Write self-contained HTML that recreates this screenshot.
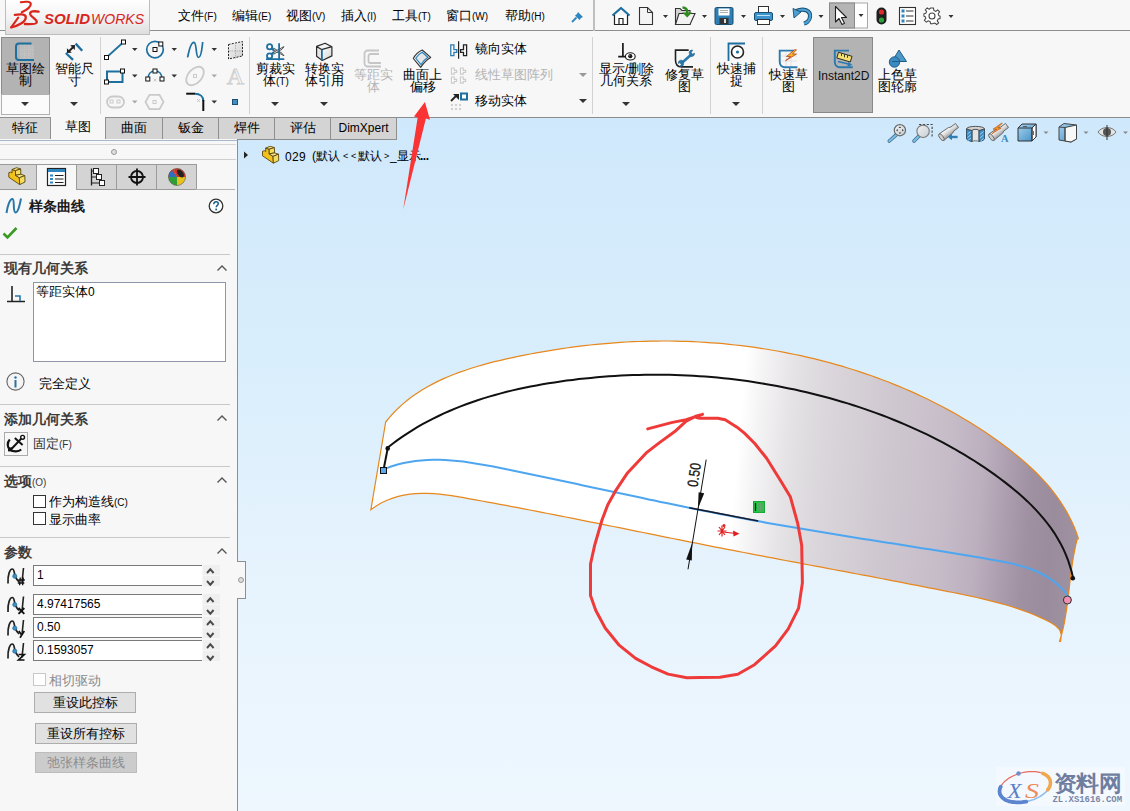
<!DOCTYPE html>
<html><head><meta charset="utf-8">
<style>
*{margin:0;padding:0;box-sizing:border-box}
html,body{width:1130px;height:811px;overflow:hidden}
body{position:relative;background:#f7f7f7;font-family:"Liberation Sans",sans-serif;color:#000;font-size:13px}
.a{position:absolute}
.t{position:absolute;white-space:nowrap;line-height:1}
.sm{font-size:10px}
#top{left:0;top:0;width:1130px;height:31px;background:#f7f7f7;border-bottom:1px solid #8f8f8f}
#logo{left:5px;top:0;width:145px;height:35px;border:1px solid #bdbdbd;border-top:none;background:linear-gradient(#ffffff,#f2f2f2 55%,#dedede)}
#ribbon{left:0;top:31px;width:1130px;height:87px;background:#f7f7f7;border-bottom:1px solid #8c8c8c}
.vsep{position:absolute;width:1px;background:#d2d2d2}
.tab{position:absolute;top:117px;height:23px;background:#d4d4d4;border:1px solid #8f8f8f;border-left:none;text-align:center;font-size:13px;line-height:20px}
#vp{left:238px;top:118px;width:892px;height:693px;background:linear-gradient(#cfe8fb 0%,#d9eefc 35%,#e6f3fd 65%,#eef7fe 100%)}
#panel{left:0;top:139px;width:238px;height:672px;background:#f7f7f7;border-right:1px solid #8f8f8f}
.hline{position:absolute;height:1px;background:#c4c4c4}
.hdr{position:absolute;font-weight:bold;font-size:14px;color:#3c3c3c;white-space:nowrap;line-height:1}
.caret{position:absolute;width:10px;height:6px}
.inp{position:absolute;left:33px;width:169px;height:21px;background:#fff;border:1px solid #7a7a7a;border-right:none;font-size:12px;padding-left:3px;line-height:19px}
.spin{position:absolute;left:203px;width:17px;height:21px;background:linear-gradient(#efefef 0,#efefef 10px,#f7f7f7 10px,#f7f7f7 11px,#efefef 11px)}
.btn{position:absolute;background:#e1e1e1;border:1px solid #adadad;text-align:center;font-size:13px;line-height:19px}
</style></head><body>

<!-- TOP BAR -->
<div id="top" class="a"></div>

<div class="t" style="left:178px;top:9px;font-size:13px">文件<span class="sm">(F)</span></div>
<div class="t" style="left:232px;top:9px;font-size:13px">编辑<span class="sm">(E)</span></div>
<div class="t" style="left:286px;top:9px;font-size:13px">视图<span class="sm">(V)</span></div>
<div class="t" style="left:341px;top:9px;font-size:13px">插入<span class="sm">(I)</span></div>
<div class="t" style="left:392px;top:9px;font-size:13px">工具<span class="sm">(T)</span></div>
<div class="t" style="left:446px;top:9px;font-size:13px">窗口<span class="sm">(W)</span></div>
<div class="t" style="left:505px;top:9px;font-size:13px">帮助<span class="sm">(H)</span></div>
<div class="a" style="left:593px;top:0;width:2px;height:31px;background:#bfbfbf"></div>


<!-- pin -->
<svg class="a" style="left:571px;top:10px" width="14" height="13" viewBox="0 0 14 13">
 <path d="M7 2L12 7L10 8L8.5 10L4 5.5L6 4Z" fill="#2e86c1"/><path d="M5.5 7.5L1 12" stroke="#2e86c1" stroke-width="1.8"/>
</svg>
<!-- quick access -->
<svg class="a" style="left:600px;top:0" width="360" height="31" viewBox="600 0 360 31">
 <!-- home -->
 <path d="M612.5 15.5L621 8L629.5 15.5" fill="none" stroke="#1d6fa0" stroke-width="2.2" stroke-linejoin="round"/>
 <path d="M614.5 15V24.5H627.5V15" fill="#fff" stroke="#222" stroke-width="1.2"/>
 <path d="M619 24.5V18.5H623V24.5" fill="none" stroke="#222" stroke-width="1.2"/>
 <!-- new -->
 <path d="M639.5 7.5H647.5L652.5 12.5V24.5H639.5Z" fill="#f4f4f4" stroke="#333" stroke-width="1.1"/>
 <path d="M647.5 7.5V12.5H652.5" fill="none" stroke="#333" stroke-width="1"/>
 <!-- open -->
 <path d="M675.5 8.5H680L682 10.5H690V24.5H675.5Z" fill="#d4d4d4" stroke="#333" stroke-width="1.1"/>
 <path d="M679 13.5H695L690 24.5H675.5Z" fill="#f2f2f2" stroke="#333" stroke-width="1.1"/>
 <path d="M682.5 7.5C685.5 7.5 687.5 9.5 687.3 13" fill="none" stroke="#2e8a1c" stroke-width="2.6"/>
 <path d="M682.3 12.4H692L687.2 17.6Z" fill="#2e8a1c"/>

 <!-- save -->
 <rect x="715" y="7.5" width="18" height="17" rx="1.5" fill="#2d7fb5" stroke="#1a4e70" stroke-width="1"/>
 <rect x="718.5" y="8.5" width="11" height="7" fill="#fff"/>
 <path d="M720 10.5H728M720 12.5H728" stroke="#999" stroke-width="0.8"/>
 <rect x="719.5" y="18" width="9" height="6" fill="#333"/><rect x="724" y="19" width="2" height="4" fill="#ddd"/>
 <!-- print -->
 <rect x="758.5" y="6.5" width="10" height="6" fill="#fff" stroke="#333" stroke-width="1"/>
 <rect x="754.5" y="12.5" width="18" height="8" rx="1.5" fill="#3d95cf" stroke="#1a4e70" stroke-width="1"/>
 <rect x="757.5" y="19.5" width="12" height="5" fill="#fff" stroke="#333" stroke-width="1"/>
 <path d="M757 15.5H770" stroke="#bfe0f5" stroke-width="1"/>
 <!-- undo -->
 <path d="M796.5 11C803 8 811 10 810 17C809.5 21 806 23 804 23.5" fill="none" stroke="#1a4e70" stroke-width="4.2"/>
 <path d="M796.5 11C803 8 811 10 810 17C809.5 21 806 23 804 23.5" fill="none" stroke="#4a9fd5" stroke-width="2.4"/>
 <path d="M793 8.5L794 18L801 12Z" fill="#4a9fd5" stroke="#1a4e70" stroke-width="0.9"/>
 <!-- select -->
 <rect x="829.5" y="3" width="38" height="25" fill="#fff" stroke="#a8a8a8" stroke-width="1"/>
 <rect x="829.5" y="3" width="25" height="25" fill="#b5b5b5" stroke="#8a8a8a" stroke-width="1"/>
 <path d="M835.5 6.5V22L839 18.5L842 24.5L844.5 23.3L841.5 17.5H846.5Z" fill="#fff" stroke="#222" stroke-width="1.1" stroke-linejoin="round"/>
 <!-- traffic -->
 <rect x="876.5" y="7.5" width="10" height="17" rx="5" fill="#1f1f1f"/>
 <circle cx="881.5" cy="12" r="2.6" fill="#e02b2b"/><circle cx="881.5" cy="20" r="2.6" fill="#2ba33a"/>
 <!-- options -->
 <rect x="899.5" y="7.5" width="16" height="17" fill="#fff" stroke="#333" stroke-width="1.1"/>
 <g fill="#2e86c1"><rect x="901.5" y="9.5" width="3" height="3"/><rect x="901.5" y="14.5" width="3" height="3"/><rect x="901.5" y="19.5" width="3" height="3"/></g>
 <path d="M906 11H913.5M906 16H913.5M906 21H913.5" stroke="#333" stroke-width="1"/>
 <!-- gear -->
 <g transform="translate(932,16)"><path d="M-1.5 -8H1.5L2 -5.5L4 -4.5L6 -6L8 -4L6.5 -2L7.2 0L8.5 0.5V3L6.5 3.5L5.5 5.5L7 7.5L5 9.3L3 7.8L1.2 8.3L0.8 8.5H-1.5L-2 6.2L-4 5.3L-6 6.8L-8 4.8L-6.5 2.8L-7.2 1L-8.5 0.5V-2L-6.5 -2.5L-5.7 -4.3L-7 -6.3L-5 -8.2L-3 -6.7Z" transform="translate(0,-0.3) scale(0.95)" fill="#fff" stroke="#444" stroke-width="1.1"/><circle r="3" fill="none" stroke="#444" stroke-width="1.1"/></g>
 <g fill="#333"><path d="M663 15H668L665.5 18Z"/><path d="M702 15H707L704.5 18Z"/><path d="M741 15H746L743.5 18Z"/><path d="M780 15H785L782.5 18Z"/><path d="M818.5 15H823.5L821 18Z"/><path d="M858.5 14H863.5L861 17Z"/><path d="M948.5 15H953.5L951 18Z"/></g>
</svg>

<!-- RIBBON -->
<div id="ribbon" class="a"></div>

<div id="logo" class="a"></div>
<svg class="a" style="left:8px;top:0" width="142" height="32" viewBox="0 0 142 32">
 <g fill="none" stroke="#d9261c" stroke-width="2.3" stroke-linecap="round" stroke-linejoin="round">
  <path d="M12.8,2.2 C17,1.6 22.5,1.2 22.8,3.8 C23,7 17.5,10.5 13.8,12.2" stroke-width="2.1"/>
  <path d="M6.8,14.9 C11,14.3 17.8,13.6 17.8,17.2 C17.8,22 10,26 3.2,27.4"/>
  <path d="M10.2,17.6 L3.4,27.2" stroke-width="2"/>
  <path d="M30.6,11.7 C26.5,10.8 21.5,11.2 22.2,14.2 C23,17.2 29,19 28.8,22 C28.6,24.3 22,24.4 16.9,24"/>
 </g>
 <text x="36" y="24" font-family="Liberation Sans" font-weight="bold" font-style="italic" font-size="14" fill="#d9261c" textLength="46" lengthAdjust="spacingAndGlyphs">SOLID</text>
 <text x="83" y="24" font-family="Liberation Sans" font-style="italic" font-size="14" fill="#d9261c" textLength="53" lengthAdjust="spacingAndGlyphs">WORKS</text>
</svg>

<!-- VIEWPORT -->
<div id="vp" class="a"></div>


<!-- ribbon buttons -->
<div class="a" style="left:1px;top:37px;width:49px;height:58px;background:#b3b3b3;border:1px solid #8a8a8a"></div>
<div class="a" style="left:1px;top:94px;width:49px;height:21px;background:#fbfbfb;border:1px solid #b0b0b0"></div>
<svg class="a" style="left:14px;top:42px" width="22" height="20" viewBox="0 0 22 20">
 <g fill="#bcbcbc"><rect x="6" y="3" width="14" height="14"/></g>
 <path d="M6 7.5H20M6 12H20M10.5 3V17M15 3V17" fill="none" stroke="#c6c6c6" stroke-width="1" stroke-dasharray="1,1"/>
 <path d="M17.5 1.5H5C3.3 1.5 2 2.8 2 4.5V15C2 16.7 3.3 18 5 18H20" fill="none" stroke="#1d6fa0" stroke-width="2"/>
</svg>
<div class="t" style="left:6px;top:62px">草图绘</div>
<div class="t" style="left:19px;top:74px">制</div>
<svg class="a" style="left:21px;top:102px" width="8" height="5"><path d="M0 0H8L4 4Z" fill="#333"/></svg>

<svg class="a" style="left:62px;top:42px" width="22" height="20" viewBox="0 0 22 20">
 <path d="M13.6,1.6 L20.2,8.8" stroke="#1d6fa0" stroke-width="2.3" fill="none"/>
 <path d="M3.8,11 L11,17.8" stroke="#1d6fa0" stroke-width="2.3" fill="none"/>
 <path d="M7,9.2 L11,5.2" stroke="#222" stroke-width="2"/>
 <path d="M8.2,3.2 L13,3 L12.8,7.9 Z M4.9,6.2 L5,11 L9.8,10.8 Z" fill="#222"/>
</svg>
<div class="t" style="left:55px;top:62px">智能尺</div>
<div class="t" style="left:68px;top:74px">寸</div>
<svg class="a" style="left:70px;top:102px" width="8" height="5"><path d="M0 0H8L4 4Z" fill="#333"/></svg>
<div class="vsep" style="left:100px;top:37px;height:77px"></div>

<!-- small sketch tools -->
<svg class="a" style="left:103px;top:38px" width="145" height="76" viewBox="103 38 145 76">
 <g fill="none" stroke="#1d6fa0" stroke-width="1.7">
  <path d="M107 57L123 42.5"/>
  <circle cx="155" cy="49.6" r="8.3"/>
  <path d="M187.6 57.4C189 50 191 42 194 42.3C197 42.6 195.5 57.5 198.5 57.5C201.5 57.5 202 48 202.7 42"/>
  <path d="M107 71.5H122.5V82H107Z" stroke-width="2"/>
  <path d="M148 79C148 74 151 71 155 71C159 71 162 74 162 79"/>
 </g>
 <path d="M186.2 93.7H195" stroke="#111" stroke-width="2"/>
 <path d="M195 93.7C200 93.7 203.3 96.5 203.3 101" fill="none" stroke="#1d6fa0" stroke-width="2"/>
 <path d="M203.3 100V111" stroke="#111" stroke-width="2"/>
 <g fill="#fff" stroke="#111" stroke-width="1">
  <rect x="104.5" y="55.5" width="4" height="4"/><rect x="121.5" y="40" width="4" height="4"/>
  <rect x="153" y="47.5" width="4" height="4"/><rect x="158.8" y="42" width="4" height="4"/>
  <rect x="104.5" y="80" width="4" height="4"/><rect x="120.5" y="69" width="4" height="4"/>
  <rect x="145.8" y="77" width="4" height="4"/><rect x="160" y="77" width="4" height="4"/><rect x="153" y="69" width="4" height="4"/>
 </g>
 <path d="M153.5 78.5L156.5 81.5M156.5 78.5L153.5 81.5" stroke="#bbb" stroke-width="0.8"/>
 <path d="M197 99L200 102M200 99L197 102" stroke="#bbb" stroke-width="0.8"/>
 <!-- disabled -->
 <g fill="none" stroke="#cacaca" stroke-width="1.8">
  <rect x="107" y="96.5" width="17" height="11" rx="5.5"/>
  <path d="M149.5 94.8H159.5L163.5 102L159.5 109.2H149.5L145.5 102Z"/>
  <ellipse cx="195" cy="76" rx="10.8" ry="6.8" transform="rotate(-48 195 76)"/>
 </g>
 <g fill="none" stroke="#cacaca" stroke-width="1"><rect x="110" y="100" width="3" height="3"/><rect x="117" y="100" width="3" height="3"/><rect x="153" y="100.5" width="3" height="3"/><rect x="193.5" y="74.5" width="3" height="3"/></g>
 <text x="235.3" y="84" font-family="Liberation Serif" font-size="24" fill="#fafafa" stroke="#cdcdcd" stroke-width="0.9" text-anchor="middle">A</text>
 <!-- plane -->
 <defs><linearGradient id="pl" x1="0" y1="0" x2="1" y2="1"><stop offset="0" stop-color="#f4f4f4"/><stop offset="1" stop-color="#d0d0d0"/></linearGradient></defs>
 <path d="M228.5 44.5L242.5 41.5V56L228.5 59Z" fill="url(#pl)" stroke="#222" stroke-width="1" stroke-dasharray="2,1.3"/>
 <path d="M235.5 42.5V58.5M229 51H242" stroke="#999" stroke-width="0.7" stroke-dasharray="1.5,1"/>
 <rect x="232.5" y="99.5" width="5" height="5" fill="#3d8fc4" stroke="#1b4f73" stroke-width="1"/>
 <g fill="#333"><path d="M132 48H137.5L134.75 51Z"/><path d="M171.5 48H177L174.25 51Z"/><path d="M211.5 48H217L214.25 51Z"/>
 <path d="M132 74.5H137.5L134.75 77.5Z"/><path d="M171.5 74.5H177L174.25 77.5Z"/><path d="M211.5 100.5H217L214.25 103.5Z"/></g>
 <g fill="#a8a8a8"><path d="M211.5 74.5H217L214.25 77.5Z"/><path d="M132 100.5H137.5L134.75 103.5Z"/></g>
</svg>
<div class="vsep" style="left:249px;top:37px;height:77px"></div>

<!-- trim etc -->
<svg class="a" style="left:262px;top:41px" width="26" height="22" viewBox="262 41 26 22">
 <path d="M272.5,49.5 L284,55.8 L282,53.2 L273.5,48 Z" fill="#e8e8e8" stroke="#333" stroke-width="0.8"/>
 <path d="M272.5,52.8 L284,46.6 L282,49.3 L273.5,54.3 Z" fill="#e8e8e8" stroke="#333" stroke-width="0.8"/>
 <path d="M279.1,43.2 V60.5 M266,59.1 H284.3" stroke="#1d6fa0" stroke-width="1.8" fill="none"/>
 <circle cx="269.6" cy="46.7" r="2.6" fill="#fff" stroke="#1d6fa0" stroke-width="1.8"/>
 <circle cx="269.6" cy="55.9" r="2.6" fill="#fff" stroke="#1d6fa0" stroke-width="1.8"/>
 <path d="M271.5,48.5 L274,50.5 M271.5,54 L274,52" stroke="#1d6fa0" stroke-width="2"/>
</svg>
<div class="t" style="left:256px;top:62px">剪裁实</div>
<div class="t" style="left:263px;top:74px">体<span class="sm">(T)</span></div>
<svg class="a" style="left:271px;top:102px" width="8" height="5"><path d="M0 0H8L4 4Z" fill="#333"/></svg>

<svg class="a" style="left:314px;top:41px" width="20" height="22" viewBox="314 41 20 22">
 <defs><linearGradient id="cvr" x1="0" y1="0" x2="1" y2="1"><stop offset="0" stop-color="#ffffff"/><stop offset="1" stop-color="#d4d4d4"/></linearGradient></defs>
 <path d="M316.6,46.4 L325.1,43.2 L331.9,46.7 L321.6,49.6 Z" fill="#f4f4f4"/>
 <path d="M321.6,49.6 L331.9,46.7 V55.9 L322.3,60.5 Z" fill="url(#cvr)"/>
 <path d="M316.6,46.4 L321.6,49.6 L322.3,60.5 L316.6,56.3 Z" fill="#e6e6e6"/>
 <path d="M316.6,46.4 L325.1,43.2 L331.9,46.7 V55.9 L322.3,60.5 L316.6,56.3 Z M316.6,46.4 L321.6,49.6 L331.9,46.7" fill="none" stroke="#2a2a2a" stroke-width="1.2" stroke-linejoin="round"/>
 <path d="M321.9,49.8 V60.3" stroke="#1d6fa0" stroke-width="1.8"/>
</svg>
<div class="t" style="left:305px;top:62px">转换实</div>
<div class="t" style="left:305px;top:74px">体引用</div>
<svg class="a" style="left:320px;top:102px" width="8" height="5"><path d="M0 0H8L4 4Z" fill="#333"/></svg>

<svg class="a" style="left:363px;top:49px" width="20" height="19" viewBox="0 0 20 19">
 <path d="M16 1.5H4.5C3 1.5 1.5 3 1.5 4.5V14.5C1.5 16 3 17.5 4.5 17.5H18" fill="none" stroke="#c6c6c6" stroke-width="1.8"/>
 <path d="M16 5H7.5C6.5 5 5.5 6 5.5 7V12.5C5.5 13.5 6.5 14 7.5 14H18" fill="none" stroke="#c6c6c6" stroke-width="1.8"/>
</svg>
<div class="t" style="left:354px;top:68px;color:#b4b4b4">等距实</div>
<div class="t" style="left:367px;top:80px;color:#b4b4b4">体</div>

<svg class="a" style="left:411px;top:48px" width="22" height="22" viewBox="411 48 22 22">
 <defs><linearGradient id="osf" x1="0" y1="0" x2="1" y2="1"><stop offset="0" stop-color="#ffffff"/><stop offset="1" stop-color="#c8c8c8"/></linearGradient></defs>
 <path d="M413.3,58.5 C415,55 418,52 422.2,50 L430.7,57.4 C427,59.5 423.5,63 420.7,67.4 Z" fill="url(#osf)" stroke="#333" stroke-width="1.1" stroke-linejoin="round"/>
 <path d="M415.8,58.3 C417.3,55.6 419.5,53.6 422.2,52.3 L427.8,57.3 C425.2,59 423,61.5 421,64.6 Z" fill="#e6e6e6" stroke="#2e86c1" stroke-width="1.2"/>
</svg>
<div class="t" style="left:403px;top:68px">曲面上</div>
<div class="t" style="left:410px;top:80px">偏移</div>

<!-- mirror/pattern/move -->
<svg class="a" style="left:448px;top:40px" width="22" height="20" viewBox="448 40 22 20">
 <path d="M450.8,44.9 H453.9 V49.7 H456.8 V52.3 H453.9 V55.6 H450.8 Z" fill="#fff" stroke="#2a7ab0" stroke-width="1.3"/>
 <path d="M466.6,44.9 H463.5 V49.7 H460.6 V52.3 H463.5 V55.6 H466.6 Z" fill="#fff" stroke="#222" stroke-width="1.3"/>
 <path d="M458.6,41.2 V58.8" stroke="#222" stroke-width="1.2"/>
</svg>
<div class="t" style="left:475px;top:42px">镜向实体</div>
<svg class="a" style="left:449px;top:66px" width="20" height="20" viewBox="449 66 20 20">
 <g fill="#fff" stroke="#cbcbcb" stroke-width="1.2">
  <path d="M451.5,68 H454.2 V70.4 H456.6 V72.4 H454.2 V74.2 H451.5 Z"/>
  <path d="M460.5,68 H463.2 V70.4 H465.6 V72.4 H463.2 V74.2 H460.5 Z"/>
  <path d="M451.5,77 H454.2 V79.4 H456.6 V81.4 H454.2 V83.2 H451.5 Z"/>
  <path d="M460.5,77 H463.2 V79.4 H465.6 V81.4 H463.2 V83.2 H460.5 Z"/>
 </g>
</svg>
<div class="t" style="left:475px;top:68px;color:#b4b4b4">线性草图阵列</div>
<svg class="a" style="left:579px;top:73px" width="8" height="5"><path d="M0 0H8L4 4Z" fill="#999"/></svg>
<svg class="a" style="left:449px;top:92px" width="20" height="20" viewBox="0 0 20 20">
 <path d="M2 9L8 3" stroke="#222" stroke-width="1.8"/><path d="M4 2H10V8Z" fill="#222"/>
 <rect x="12" y="1.5" width="6" height="6" fill="#fff" stroke="#1d6fa0" stroke-width="2"/>
 <g fill="#d0d0d0"><rect x="2" y="12" width="2" height="2"/><rect x="6" y="12" width="2" height="2"/><rect x="2" y="16" width="2" height="2"/><rect x="6" y="16" width="2" height="2"/><rect x="10" y="16" width="2" height="2"/><rect x="10" y="12" width="2" height="2"/></g>
</svg>
<div class="t" style="left:475px;top:94px">移动实体</div>
<svg class="a" style="left:579px;top:99px" width="8" height="5"><path d="M0 0H8L4 4Z" fill="#333"/></svg>
<div class="vsep" style="left:592px;top:37px;height:77px"></div>

<svg class="a" style="left:612px;top:40px" width="26" height="22" viewBox="612 40 26 22">
 <path d="M622.9,43.1 V56.7 M618.2,56.7 H625.6" stroke="#1a1a1a" stroke-width="1.7" fill="none"/>
 <ellipse cx="630.3" cy="56.4" rx="4.9" ry="3.6" fill="#fff" stroke="#1a1a1a" stroke-width="1.1"/>
 <circle cx="630.3" cy="56.2" r="2.1" fill="#1a1a1a"/><circle cx="629.7" cy="55.6" r="0.6" fill="#888"/>
</svg>
<div class="t" style="left:599px;top:62px">显示<span style="font-size:12px">/</span>删除</div>
<div class="t" style="left:600px;top:74px">几何关系</div>
<svg class="a" style="left:622px;top:102px" width="8" height="5"><path d="M0 0H8L4 4Z" fill="#333"/></svg>

<svg class="a" style="left:672px;top:47px" width="24" height="22" viewBox="672 47 24 22">
 <path d="M688.7,50.1 H675.5 V60 C675.5,64 677.5,66.9 681.5,66.9 H693" fill="none" stroke="#222" stroke-width="1.6"/>
 <path d="M681.5,63.2 L690.2,55.5" stroke="#2a7ab0" stroke-width="2.6" stroke-linecap="round"/>
 <path d="M689.2,53.2 C689,51 690.8,49.6 692.8,50.3 L691.2,52.3 L692.4,54.2 L694.5,53.2 C694.8,55.5 692.8,57 690.6,56.3 Z" fill="#2a7ab0" stroke="#1d5f8a" stroke-width="0.6"/>
 <path d="M682.6,65.5 C682.8,67.7 681,69 679,68.3 L680.6,66.3 L679.4,64.4 L677.3,65.4 C677,63.1 679,61.6 681.2,62.3 Z" fill="#2a7ab0" stroke="#1d5f8a" stroke-width="0.6" transform="translate(1,-2)"/>
</svg>
<div class="t" style="left:665px;top:68px">修复草</div>
<div class="t" style="left:678px;top:80px">图</div>
<div class="vsep" style="left:710px;top:37px;height:77px"></div>

<svg class="a" style="left:727px;top:42px" width="20" height="19" viewBox="0 0 20 19">
 <path d="M1.5 19V1.5H18" fill="none" stroke="#1d6fa0" stroke-width="1.8"/>
 <circle cx="10.5" cy="10" r="6" fill="#fff" stroke="#222" stroke-width="1.6"/>
 <circle cx="10.5" cy="10" r="1.6" fill="#1d6fa0"/>
</svg>
<div class="t" style="left:717px;top:62px">快速捕</div>
<div class="t" style="left:730px;top:74px">捉</div>
<svg class="a" style="left:732px;top:102px" width="8" height="5"><path d="M0 0H8L4 4Z" fill="#333"/></svg>
<div class="vsep" style="left:762px;top:37px;height:77px"></div>

<svg class="a" style="left:776px;top:47px" width="24" height="23" viewBox="776 47 24 23">
 <g stroke="#dcdcdc" stroke-width="0.8"><path d="M781 56H797M781 61H797M786 52V66M791 52V66"/></g>
 <path d="M794,50.6 H779.7 V61.5 C779.7,65 781.5,67.2 785,67.2 H797.4" fill="none" stroke="#2a7ab0" stroke-width="1.9"/>
 <path d="M794.5,49.8 L786.5,56.5 H790.5 L785.6,60.7 L796.5,54 H792.5 L796.5,49.8 Z" fill="#f7b52a" stroke="#b5401e" stroke-width="0.8" stroke-linejoin="round"/>
</svg>
<div class="t" style="left:769px;top:68px">快速草</div>
<div class="t" style="left:782px;top:80px">图</div>

<div class="a" style="left:813px;top:37px;width:60px;height:76px;background:#b3b3b3;border:1px solid #888"></div>
<svg class="a" style="left:832px;top:47px" width="24" height="23" viewBox="832 47 24 23">
 <path d="M849,50.6 H834.8 V61.5 C834.8,65 836.6,67.2 840,67.2 H852.8" fill="none" stroke="#2a7ab0" stroke-width="1.9"/>
 <path d="M838.5,52.3 L852,56.3 L850.3,62 L836.8,58 Z" fill="#f3e070" stroke="#2a2a2a" stroke-width="1"/>
 <path d="M841.5,53.5 V56 M844.5,54.3 V57.3 M847.5,55.2 V57.8" stroke="#2a2a2a" stroke-width="0.9"/>
 <path d="M838,61.5 L850.5,64.5" stroke="#2a7ab0" stroke-width="1.6"/><path d="M852.5,65 L848,62 L847.5,66.5 Z" fill="#2a7ab0"/>
</svg>
<div class="t" style="left:818px;top:70px;font-size:12px;color:#111">Instant2D</div>

<svg class="a" style="left:888px;top:49px" width="20" height="19" viewBox="0 0 20 19">
 <path d="M11 1L18.5 12.5H4Z" fill="#4e98c6" stroke="#1d5f8a" stroke-width="1"/>
 <circle cx="6.5" cy="13" r="5.2" fill="#3d8ac0" stroke="#1d5f8a" stroke-width="1"/>
 <path d="M4 12.5H11" stroke="#1d5f8a" stroke-width="1"/>
</svg>
<div class="t" style="left:878px;top:68px">上色草</div>
<div class="t" style="left:878px;top:80px">图轮廓</div>

<!-- TABS -->
<div class="tab" style="left:0;width:51px">特征</div>
<div class="tab" style="left:51px;width:55px;background:#f7f7f7;border:none;border-right:1px solid #8f8f8f">草图</div>
<div class="tab" style="left:106px;width:57px">曲面</div>
<div class="tab" style="left:163px;width:56px">钣金</div>
<div class="tab" style="left:219px;width:56px">焊件</div>
<div class="tab" style="left:275px;width:56px">评估</div>
<div class="tab" style="left:331px;width:66px;font-size:12px">DimXpert</div>



<!-- VIEWPORT CONTENT -->
<svg class="a" style="left:238px;top:118px" width="892" height="693" viewBox="238 118 892 693">
 <defs><linearGradient id="sg" gradientUnits="userSpaceOnUse" x1="370" y1="450" x2="1080" y2="514"><stop offset="0.0000" stop-color="#ffffff"/><stop offset="0.5135" stop-color="#ffffff"/><stop offset="0.5414" stop-color="#f4f3f4"/><stop offset="0.5790" stop-color="#e6e4e7"/><stop offset="0.6279" stop-color="#dbd7dc"/><stop offset="0.7116" stop-color="#d0c9d1"/><stop offset="0.8093" stop-color="#c6bcc8"/><stop offset="0.8581" stop-color="#bcafbe"/><stop offset="0.8930" stop-color="#ad9faf"/><stop offset="0.9279" stop-color="#a091a2"/><stop offset="0.9627" stop-color="#9a8c9c"/><stop offset="0.9976" stop-color="#9e91a0"/></linearGradient></defs>
 <!-- surface -->
 <path id="surf" d="M385.7,422.0 L389.7,417.1 L393.9,412.5 L398.2,408.2 L402.7,404.1 L407.3,400.2 L412.1,396.6 L417.0,393.2 L422.0,389.9 L427.1,386.9 L432.4,384.1 L437.7,381.4 L443.1,378.9 L448.6,376.5 L454.2,374.3 L459.8,372.1 L465.5,370.2 L471.2,368.3 L477.0,366.5 L482.8,364.8 L488.7,363.2 L494.5,361.7 L500.5,360.3 L506.4,358.9 L512.4,357.6 L518.3,356.4 L524.3,355.2 L530.3,354.0 L536.3,352.9 L542.3,351.8 L548.3,350.8 L554.3,349.8 L560.3,348.9 L566.3,348.0 L572.3,347.2 L578.3,346.4 L584.4,345.7 L590.4,345.0 L596.4,344.3 L602.5,343.8 L608.5,343.3 L614.5,342.8 L620.6,342.4 L626.6,342.0 L632.7,341.7 L638.7,341.5 L644.8,341.3 L650.9,341.1 L656.9,341.1 L663.0,341.0 L669.0,341.0 L675.0,341.1 L681.1,341.3 L687.1,341.4 L693.2,341.7 L699.2,342.0 L705.2,342.3 L711.3,342.8 L717.3,343.2 L723.3,343.7 L729.3,344.3 L735.3,345.0 L741.3,345.7 L747.3,346.4 L753.3,347.2 L759.3,348.1 L765.3,349.0 L771.2,350.0 L777.2,351.0 L783.1,352.1 L789.1,353.3 L795.0,354.5 L800.9,355.7 L806.8,357.1 L812.7,358.4 L818.6,359.9 L824.4,361.4 L830.3,362.9 L836.1,364.6 L841.9,366.2 L847.7,368.0 L853.5,369.8 L859.3,371.6 L865.0,373.6 L870.8,375.5 L876.5,377.6 L882.2,379.7 L887.8,381.8 L893.5,384.1 L899.1,386.4 L904.7,388.7 L910.2,391.1 L915.8,393.6 L921.3,396.2 L926.8,398.8 L932.2,401.5 L937.6,404.2 L943.0,407.0 L948.3,409.9 L953.7,412.8 L958.9,415.8 L964.2,418.9 L969.4,422.0 L974.5,425.2 L979.7,428.5 L984.7,431.8 L989.8,435.3 L994.8,438.7 L999.7,442.3 L1004.7,445.9 L1009.5,449.6 L1014.3,453.4 L1019.0,457.2 L1023.7,461.1 L1028.2,465.2 L1032.6,469.3 L1037.0,473.5 L1041.2,477.8 L1045.2,482.2 L1049.2,486.7 L1052.9,491.4 L1056.5,496.1 L1060.0,501.0 L1063.2,506.0 L1066.3,511.1 L1069.2,516.4 L1071.8,521.8 L1074.3,527.3 L1076.5,533.0 L1078.4,538.8 L1077.3,538.9 L1075.7,545.2 L1074.4,551.6 L1073.2,558.0 L1072.2,564.4 L1071.3,570.8 L1070.5,577.3 L1069.7,583.8 L1069.0,590.3 L1068.2,596.8 L1067.4,603.2 L1066.5,609.7 L1065.5,616.1 L1064.4,622.5 L1063.0,628.9 L1061.4,635.2 L1059.6,641.5 L1060.5,641.5 L1061.4,635.0 L1059.7,629.9 L1056.0,626.0 L1051.1,622.8 L1045.7,620.0 L1040.2,617.4 L1034.7,615.0 L1029.1,612.7 L1023.4,610.6 L1017.7,608.6 L1012.0,606.8 L1006.2,605.0 L1000.3,603.3 L994.5,601.8 L988.6,600.3 L982.7,598.9 L976.8,597.5 L970.8,596.2 L964.8,595.0 L958.9,593.7 L952.9,592.5 L946.9,591.3 L940.9,590.1 L934.9,588.9 L929.0,587.8 L923.0,586.6 L917.0,585.4 L911.0,584.3 L905.0,583.1 L899.1,581.9 L893.1,580.8 L887.1,579.6 L881.1,578.5 L875.2,577.4 L869.2,576.2 L863.2,575.1 L857.2,574.0 L851.3,572.8 L845.3,571.7 L839.3,570.6 L833.3,569.5 L827.4,568.3 L821.4,567.2 L815.4,566.1 L809.5,565.0 L803.5,563.8 L797.5,562.7 L791.6,561.6 L785.6,560.5 L779.6,559.3 L773.7,558.2 L767.7,557.1 L761.8,555.9 L755.8,554.8 L749.9,553.7 L743.9,552.5 L738.0,551.4 L732.0,550.2 L726.1,549.1 L720.1,547.9 L714.2,546.8 L708.3,545.6 L702.3,544.4 L696.4,543.2 L690.5,542.1 L684.5,540.9 L678.6,539.7 L672.7,538.5 L666.7,537.3 L660.8,536.1 L654.9,534.9 L648.9,533.7 L643.0,532.5 L637.1,531.3 L631.2,530.1 L625.2,528.9 L619.3,527.7 L613.3,526.5 L607.4,525.3 L601.5,524.1 L595.5,522.9 L589.6,521.8 L583.6,520.6 L577.7,519.4 L571.7,518.2 L565.7,517.0 L559.8,515.8 L553.8,514.7 L547.8,513.5 L541.9,512.3 L535.9,511.2 L529.9,510.0 L523.9,508.8 L517.9,507.7 L511.9,506.6 L505.9,505.4 L499.8,504.3 L493.8,503.2 L487.8,502.1 L481.8,501.0 L475.7,499.9 L469.7,498.8 L463.6,497.7 L457.5,496.7 L451.5,495.7 L445.4,494.9 L439.4,494.2 L433.4,493.7 L427.5,493.4 L421.5,493.4 L415.6,493.6 L409.8,494.2 L404.0,495.1 L398.3,496.4 L392.7,498.1 L387.1,500.2 L381.6,502.8 L376.2,506.0 L370.9,509.7 Z" fill="url(#sg)" stroke="#e8871c" stroke-width="1.2"/>
 <!-- black sketch arc -->
 <path d="M387.5,447.7 L392.3,444.0 L397.1,440.4 L402.1,436.9 L407.1,433.6 L412.2,430.3 L417.3,427.2 L422.5,424.2 L427.8,421.4 L433.1,418.6 L438.5,416.0 L443.9,413.4 L449.4,411.0 L455.0,408.6 L460.6,406.4 L466.2,404.3 L471.9,402.2 L477.6,400.3 L483.3,398.4 L489.1,396.6 L495.0,395.0 L500.8,393.4 L506.7,391.8 L512.6,390.4 L518.5,389.0 L524.5,387.8 L530.5,386.5 L536.5,385.4 L542.5,384.3 L548.5,383.3 L554.5,382.4 L560.5,381.5 L566.6,380.6 L572.6,379.9 L578.7,379.1 L584.7,378.5 L590.8,377.9 L596.8,377.3 L602.8,376.8 L608.9,376.3 L614.9,375.9 L621.0,375.6 L627.0,375.3 L633.1,375.1 L639.1,374.9 L645.2,374.8 L651.2,374.7 L657.2,374.7 L663.3,374.8 L669.3,374.8 L675.3,375.0 L681.3,375.2 L687.4,375.5 L693.4,375.8 L699.4,376.2 L705.4,376.6 L711.4,377.1 L717.4,377.6 L723.4,378.2 L729.4,378.8 L735.4,379.5 L741.3,380.3 L747.3,381.1 L753.3,382.0 L759.2,382.9 L765.2,383.9 L771.1,384.9 L777.1,386.0 L783.0,387.2 L788.9,388.4 L794.8,389.6 L800.7,390.9 L806.6,392.3 L812.5,393.7 L818.4,395.2 L824.3,396.7 L830.1,398.3 L836.0,400.0 L841.8,401.7 L847.6,403.4 L853.4,405.3 L859.2,407.1 L865.0,409.1 L870.7,411.1 L876.4,413.1 L882.2,415.3 L887.8,417.4 L893.5,419.7 L899.1,422.0 L904.7,424.3 L910.3,426.8 L915.9,429.3 L921.4,431.8 L926.9,434.4 L932.3,437.1 L937.7,439.9 L943.1,442.7 L948.5,445.6 L953.8,448.5 L959.0,451.6 L964.3,454.7 L969.4,457.8 L974.6,461.0 L979.7,464.3 L984.7,467.7 L989.7,471.1 L994.7,474.6 L999.6,478.2 L1004.4,481.9 L1009.2,485.6 L1013.9,489.4 L1018.5,493.3 L1023.0,497.3 L1027.5,501.4 L1031.8,505.6 L1035.9,509.9 L1039.9,514.3 L1043.8,518.8 L1047.5,523.5 L1051.0,528.2 L1054.4,533.1 L1057.5,538.2 L1060.5,543.4 L1063.2,548.7 L1065.6,554.2 L1067.9,559.8 L1069.8,565.6 L1071.6,571.5 L1073.0,577.7" fill="none" stroke="#111" stroke-width="2"/>
 <path d="M387.7,448.4 L383.5,470" stroke="#111" stroke-width="2"/>
 <circle cx="387.7" cy="448.4" r="2.3" fill="#111"/>
 <circle cx="1072.8" cy="578.2" r="2.3" fill="#111"/>
 <!-- blue spline -->
 <path d="M386.0,468.4 L391.8,466.3 L397.7,464.5 L403.6,463.1 L409.5,461.9 L415.4,461.0 L421.3,460.4 L427.3,460.0 L433.2,459.8 L439.2,459.8 L445.2,460.0 L451.2,460.4 L457.2,460.9 L463.2,461.6 L469.2,462.4 L475.2,463.4 L481.2,464.4 L487.3,465.5 L493.3,466.6 L499.3,467.8 L505.3,469.0 L511.3,470.3 L517.3,471.5 L523.3,472.7 L529.3,474.0 L535.3,475.2 L541.3,476.5 L547.3,477.7 L553.3,479.0 L559.2,480.3 L565.2,481.6 L571.2,482.8 L577.1,484.1 L583.1,485.4 L589.1,486.7 L595.0,487.9 L601.0,489.2 L606.9,490.5 L612.9,491.8 L618.8,493.0 L624.8,494.3 L630.7,495.6 L636.7,496.8 L642.6,498.1 L648.6,499.4 L654.5,500.6 L660.5,501.9 L666.4,503.1 L672.3,504.3 L678.3,505.6 L684.2,506.8 L690.2,508.0 L696.1,509.2 L702.1,510.4 L708.0,511.6 L714.0,512.8 L719.9,514.0 L725.9,515.1 L731.8,516.3 L737.8,517.4 L743.7,518.5 L749.7,519.7 L755.6,520.8 L761.6,521.8 L767.5,522.9 L773.5,524.0 L779.5,525.0 L785.4,526.1 L791.4,527.1 L797.4,528.1 L803.4,529.1 L809.4,530.1 L815.3,531.1 L821.3,532.1 L827.3,533.1 L833.3,534.1 L839.3,535.0 L845.3,536.0 L851.3,537.0 L857.3,537.9 L863.3,538.9 L869.3,539.8 L875.3,540.8 L881.3,541.7 L887.4,542.7 L893.4,543.6 L899.4,544.6 L905.4,545.5 L911.5,546.5 L917.5,547.4 L923.5,548.4 L929.6,549.3 L935.6,550.3 L941.7,551.3 L947.7,552.3 L953.8,553.3 L959.8,554.2 L965.9,555.3 L972.0,556.3 L978.0,557.3 L984.1,558.3 L990.2,559.4 L996.2,560.4 L1002.3,561.6 L1008.3,562.8 L1014.2,564.1 L1020.0,565.7 L1025.7,567.4 L1031.3,569.3 L1036.8,571.5 L1042.0,574.0 L1047.1,576.8 L1052.0,580.0 L1056.6,583.6 L1061.0,587.6 L1065.0,592.0 L1068.8,597.0" fill="none" stroke="#4ea6f0" stroke-width="2"/>
 <path d="M689.2,507.7 L758.2,521" stroke="#1a1a2a" stroke-width="1.6"/>
 <rect x="380.5" y="467.5" width="6" height="6" fill="#5aaaf0" stroke="#111" stroke-width="1"/>
 <circle cx="1067.4" cy="600" r="4" fill="#f38fb0" stroke="#333" stroke-width="1"/>
  <!-- dimension -->
 <path d="M706.2,459.6 L688,569.3" stroke="#111" stroke-width="1"/>
 <path d="M698,508.6 L698.6,492.3 L704.2,493.2Z" fill="#111"/>
 <path d="M692.2,542.9 L686.2,559.6 L691.8,560.5Z" fill="#111"/>
 <text transform="translate(697.5,487.5) rotate(-82)" font-family="Liberation Sans" font-size="15" fill="#111" stroke="#111" stroke-width="0.3" textLength="24" lengthAdjust="spacingAndGlyphs">0.50</text>
  <!-- green marker -->
 <rect x="753.5" y="501.5" width="11" height="11" fill="#22c443" stroke="#1aa838" stroke-width="1"/>
 <path d="M755.5,503V511" stroke="#111" stroke-width="1.2"/>
 <path d="M758,503V511M760.5,503V511M763,503V511" stroke="#7a9a7e" stroke-width="0.8"/>
 <!-- red origin marker -->
 <g stroke="#e02020" stroke-width="1.2" fill="none"><path d="M719,527L725,535M725,527L719,535M717.5,531H726.5M722,525.5V536.5"/><path d="M723,532L736,533.5"/></g>
 <path d="M739.5,533.8L733,530.5L733.5,536.5Z" fill="#e02020"/>
 <circle cx="724" cy="525.5" r="1.5" fill="#e02020"/>
 <!-- red circle annotation -->
 <path d="M647.7,428.9 L671.4,422.6 L686.2,419.6 L702.5,414.4 M696.5,417.5 L700.0,418.3 L717.8,418.3 L725.2,419.8 L737.0,427.2 L744.4,433.1 L754.8,443.5 L766.6,458.3 L781.4,482.0 L790.3,496.7 L797.7,523.4 L801.7,545.2 L802.4,582.9 L798.6,608.1 L788.1,629.1 L775.5,645.9 L754.5,664.7 L737.8,674.2 L719.9,677.3 L700.0,677.5 L686.9,677.7 L668.1,674.1 L651.3,666.8 L635.6,658.4 L618.8,644.8 L605.2,628.0 L595.7,610.2 L590.5,595.5 L590.5,564.0 L594.7,545.2 L602.0,520.0 L607.8,504.7 L615.2,491.4 L627.0,473.6 L646.2,452.9 L659.5,442.6 L675.8,430.7 L686.2,421.1 L696.5,415.9 L702.5,414.4" fill="none" stroke="#ef3a3a" stroke-width="3" stroke-linecap="round" stroke-linejoin="round"/>
 <!-- tree -->
 <path d="M244,151.5 L248,155 L244,158.5Z" fill="#222"/>
 <g transform="translate(258,142)" stroke="#5a4510" stroke-width="0.9" stroke-linejoin="round">
  <path d="M4.5,9.3 L6.4,8.7 L7.7,9.6 L7.7,6.1 L11.2,7.2 L11.2,11.9 L15,14.4 L15.4,21.2 L4.5,13.8 Z" fill="#f2c21a"/>
  <path d="M7.7,6.1 L12.2,4.3 L16.4,5.6 L11.2,7.2 Z" fill="#f7e48a"/>
  <path d="M11.2,7.2 L16.4,5.6 L16.5,10.9 L11.2,11.9 Z" fill="#f4dc60"/>
  <path d="M11.2,11.9 L16.5,10.9 L20.5,12.2 L15,14.4 Z" fill="#f7e48a"/>
  <path d="M15,14.4 L20.5,12.2 L20.7,18.6 L15.4,21.2 Z" fill="#f4dc60"/>
 </g>
</svg>
<div class="t" style="left:285px;top:151px;font-size:12px;letter-spacing:0.3px">029</div>
<div class="t" style="left:312px;top:150px;font-size:12px">(默认</div>
<div class="t" style="left:343px;top:152px;font-size:9px">&lt;</div>
<div class="t" style="left:351px;top:152px;font-size:9px">&lt;</div>
<div class="t" style="left:358px;top:150px;font-size:12px">默认</div>
<div class="t" style="left:384px;top:152px;font-size:9px">&gt;</div>
<div class="t" style="left:390px;top:150px;font-size:12px">_显示</div>
<div class="t" style="left:420px;top:150px;font-size:12px;font-weight:bold;letter-spacing:-0.5px">...</div>

<!-- PANEL -->
<div id="panel" class="a"></div>


<div class="hline" style="left:0;top:140px;width:237px;background:#a9b9c9"></div>
<div class="hline" style="left:0;top:144px;width:236px;background:#d6d6d6"></div>
<div class="a" style="left:111px;top:149px;width:6px;height:6px;border-radius:50%;background:#dedede;border:1px solid #9a9a9a"></div>
<div class="hline" style="left:0;top:159px;width:236px;background:#cfcfcf"></div>
<!-- panel tabs -->
<div class="a" style="left:0;top:164px;width:37px;height:26px;background:#d4d4d4;border:1px solid #9a9a9a;border-left:none"></div>
<div class="a" style="left:76px;top:164px;width:41px;height:26px;background:#d4d4d4;border:1px solid #9a9a9a;border-left:none"></div>
<div class="a" style="left:116px;top:164px;width:41px;height:26px;background:#d4d4d4;border:1px solid #9a9a9a"></div>
<div class="a" style="left:156px;top:164px;width:41px;height:26px;background:#d4d4d4;border:1px solid #9a9a9a"></div>
<div class="a" style="left:36px;top:164px;width:41px;height:26px;background:#f7f7f7;border:1px solid #9a9a9a;border-bottom:none"></div>
<div class="hline" style="left:196px;top:189px;width:39px;background:#b4b4b4"></div>
<svg class="a" style="left:0;top:164px" width="200" height="26" viewBox="0 164 200 26">
 <!-- part yellow -->
 <g transform="translate(4.3,163.4)" stroke="#5a4510" stroke-width="0.9" stroke-linejoin="round">
  <path d="M4.5,9.3 L6.4,8.7 L7.7,9.6 L7.7,6.1 L11.2,7.2 L11.2,11.9 L15,14.4 L15.4,21.2 L4.5,13.8 Z" fill="#f2c21a"/>
  <path d="M7.7,6.1 L12.2,4.3 L16.4,5.6 L11.2,7.2 Z" fill="#f7e48a"/>
  <path d="M11.2,7.2 L16.4,5.6 L16.5,10.9 L11.2,11.9 Z" fill="#f4dc60"/>
  <path d="M11.2,11.9 L16.5,10.9 L20.5,12.2 L15,14.4 Z" fill="#f7e48a"/>
  <path d="M15,14.4 L20.5,12.2 L20.7,18.6 L15.4,21.2 Z" fill="#f4dc60"/>
 </g>
 <!-- property manager -->
 <rect x="47.5" y="168.5" width="18" height="17" fill="#fff" stroke="#222" stroke-width="1.2"/>
 <rect x="48" y="169" width="17" height="3" fill="#2e86c1"/>
 <g fill="#2e86c1"><rect x="50" y="174.5" width="3" height="2"/><rect x="50" y="178" width="3" height="2"/><rect x="50" y="181.5" width="3" height="2"/></g>
 <path d="M55 175.5H63.5M55 179H63.5M55 182.5H63.5" stroke="#222" stroke-width="1.1"/>
 <!-- config manager -->
 <path d="M91.5 168.5V185.5" stroke="#222" stroke-width="1.3"/>
 <rect x="93.5" y="168.5" width="5" height="5" fill="#fff" stroke="#222"/><rect x="96.5" y="174.5" width="5" height="5" fill="#fff" stroke="#222"/><rect x="99.5" y="180.5" width="5" height="5" fill="#fff" stroke="#222"/>
 <path d="M91.5 171H93.5M91.5 177H96.5M91.5 183H99.5" stroke="#222" stroke-width="1"/>
 <!-- dimxpert crosshair -->
 <circle cx="137" cy="177" r="6" fill="none" stroke="#111" stroke-width="1.8"/>
 <path d="M137 168.5V185.5M128.5 177H145.5" stroke="#111" stroke-width="1.8"/>
 <!-- display manager -->
 <circle cx="177" cy="177" r="8.5" fill="#e8c21c"/>
 <path d="M177 177L168.5 177A8.5 8.5 0 0 1 174 169Z" fill="#d93a2a"/>
 <path d="M177 177L174 169A8.5 8.5 0 0 1 185.5 177Z" fill="#c9302c"/>
 <path d="M177 177L168.5 177A8.5 8.5 0 0 0 177 185.5Z" fill="#2f9e3a"/>
 <path d="M177 177L168.5 177A8.5 8.5 0 0 1 172 170.5Z" fill="#2d6fc4"/>
 <ellipse cx="180.5" cy="173.5" rx="2.5" ry="4.5" transform="rotate(-35 180.5 173.5)" fill="#222"/>
 <circle cx="177" cy="177" r="8.5" fill="none" stroke="#555" stroke-width="0.6"/>
</svg>

<!-- spline header -->
<svg class="a" style="left:4px;top:197px" width="20" height="18" viewBox="0 0 20 18">
 <path d="M2.5 16C3.5 9 6 1.5 8.5 2C11 2.5 8.5 15 11.5 15.5C14 16 16 7 17 1.5" fill="none" stroke="#2a78a8" stroke-width="2"/>
</svg>
<div class="t" style="left:29px;top:199px;font-size:14px;font-weight:bold;color:#1a1a1a">样条曲线</div>
<svg class="a" style="left:208px;top:198px" width="16" height="16" viewBox="0 0 16 16">
 <circle cx="8" cy="8" r="6.8" fill="#fff" stroke="#333" stroke-width="1.3"/>
 <path d="M5.8 6.2C5.8 4.6 6.8 3.8 8.1 3.8C9.5 3.8 10.3 4.7 10.3 5.8C10.3 7.3 8.2 7.5 8.2 9.3" fill="none" stroke="#1d5f8a" stroke-width="1.5"/>
 <rect x="7.3" y="10.6" width="1.8" height="1.8" fill="#1d5f8a"/>
</svg>
<svg class="a" style="left:2px;top:226px" width="16" height="14" viewBox="0 0 16 14">
 <path d="M1.5 7.5L5.5 11.5L14.5 2" fill="none" stroke="#3a9a22" stroke-width="2.6"/>
</svg>

<div class="hline" style="left:0;top:254px;width:230px;background:#c8c8c8"></div>
<div class="hdr" style="left:4px;top:261px">现有几何关系</div>
<svg class="caret" style="left:217px;top:265px" viewBox="0 0 10 6"><path d="M0.5 5.5L5 1L9.5 5.5" fill="none" stroke="#555" stroke-width="1.4"/></svg>
<svg class="a" style="left:7px;top:286px" width="18" height="17" viewBox="0 0 18 17">
 <path d="M5 0V15M0 15.5H18" stroke="#222" stroke-width="1.6" fill="none"/>
 <path d="M8 10H13V15" stroke="#2a78a8" stroke-width="1.6" fill="none"/>
</svg>
<div class="a" style="left:33px;top:282px;width:193px;height:80px;background:#fff;border:1px solid #8c96a8"></div>
<div class="t" style="left:36px;top:285px">等距实体<span style="font-size:12px">0</span></div>
<svg class="a" style="left:6px;top:372px" width="20" height="20" viewBox="0 0 20 20">
 <circle cx="9.5" cy="9.5" r="8.6" fill="#f4f4f4" stroke="#666" stroke-width="1.1"/>
 <circle cx="9.5" cy="5.5" r="1.2" fill="#2a6fa0"/>
 <path d="M9.5 8V15.5" stroke="#2a6fa0" stroke-width="2"/>
</svg>
<div class="t" style="left:39px;top:377px">完全定义</div>

<div class="hline" style="left:0;top:404px;width:230px;background:#c8c8c8"></div>
<div class="hdr" style="left:4px;top:412px">添加几何关系</div>
<svg class="caret" style="left:217px;top:415px" viewBox="0 0 10 6"><path d="M0.5 5.5L5 1L9.5 5.5" fill="none" stroke="#555" stroke-width="1.4"/></svg>
<div class="a" style="left:4px;top:432px;width:24px;height:24px;border:1px solid #aaa;background:#f7f7f7"></div>
<svg class="a" style="left:5px;top:433px" width="22" height="22" viewBox="0 0 22 22">
 <path d="M4.8,6.6 C2,9.5 2,14.5 5.2,16.8 C8.5,19 13.5,18.8 16.2,16.5" fill="none" stroke="#111" stroke-width="2.2"/>
 <path d="M5.5,17 L16.2,5.6" stroke="#111" stroke-width="2.1"/>
 <path d="M9.8,5 L17.6,12" stroke="#111" stroke-width="2"/>
 <rect x="3" y="14.4" width="4" height="4" fill="#111"/>
 <circle cx="17.6" cy="4.3" r="1.9" fill="#fff" stroke="#111" stroke-width="1.4"/>
</svg>
<div class="t" style="left:33px;top:437px;color:#333">固定<span class="sm">(F)</span></div>

<div class="hline" style="left:0;top:466px;width:230px;background:#c8c8c8"></div>
<div class="hdr" style="left:4px;top:474px">选项<span style="font-size:10px;font-weight:normal">(O)</span></div>
<svg class="caret" style="left:217px;top:477px" viewBox="0 0 10 6"><path d="M0.5 5.5L5 1L9.5 5.5" fill="none" stroke="#555" stroke-width="1.4"/></svg>
<div class="a" style="left:33px;top:495px;width:13px;height:13px;background:#fff;border:1px solid #333"></div>
<div class="t" style="left:49px;top:495px">作为构造线<span class="sm">(C)</span></div>
<div class="a" style="left:33px;top:512px;width:13px;height:13px;background:#fff;border:1px solid #333"></div>
<div class="t" style="left:49px;top:513px">显示曲率</div>

<div class="hline" style="left:0;top:537px;width:230px;background:#c8c8c8"></div>
<div class="hdr" style="left:4px;top:545px">参数</div>
<svg class="caret" style="left:217px;top:548px" viewBox="0 0 10 6"><path d="M0.5 5.5L5 1L9.5 5.5" fill="none" stroke="#555" stroke-width="1.4"/></svg>

<div class="inp" style="top:565px">1</div><div class="spin" style="top:565px"></div>
<div class="inp" style="top:594px">4.97417565</div><div class="spin" style="top:594px"></div>
<div class="inp" style="top:617px">0.50</div><div class="spin" style="top:617px"></div>
<div class="inp" style="top:640px">0.1593057</div><div class="spin" style="top:640px"></div>
<svg class="a" style="left:0;top:560px" width="236" height="105" viewBox="0 560 236 105">
 <g fill="none" stroke="#4a4a4a" stroke-width="1.9">
  <path d="M207,573 L210.3,569.3 L213.6,573 M207,581 L210.3,584.7 L213.6,581"/>
  <path d="M207,602 L210.3,598.3 L213.6,602 M207,610 L210.3,613.7 L213.6,610"/>
  <path d="M207,625 L210.3,621.3 L213.6,625 M207,633 L210.3,636.7 L213.6,633"/>
  <path d="M207,648 L210.3,644.3 L213.6,648 M207,656 L210.3,659.7 L213.6,656"/>
 </g>
 <path d="M8,583.5 C7.5,574.5 10,569.0 12.3,569.0 C14.8,569.0 14,574.5 15.5,577.0 C16.5,579.0 18,581.0 19,582.0" fill="none" stroke="#222" stroke-width="1.7"/>
 <path d="M23.5,568.0 L22,582.5" stroke="#222" stroke-width="1.6"/>
 <circle cx="14.8" cy="576.2" r="2.1" fill="#3b8fc4" stroke="#1d5f8a" stroke-width="0.6"/>
 <path d="M18.3,580.0 H24.8 M17.8,583.0 H24.3 M20.3,577.5 L19.6,585.3 M23.3,577.5 L22.6,585.3" stroke="#111" stroke-width="1.3" fill="none"/>
 <path d="M8,612 C7.5,603 10,597.5 12.3,597.5 C14.8,597.5 14,603 15.5,605.5 C16.5,607.5 18,609.5 19,610.5" fill="none" stroke="#222" stroke-width="1.7"/>
 <path d="M23.5,596.5 L22,611" stroke="#222" stroke-width="1.6"/>
 <circle cx="14.8" cy="604.7" r="2.1" fill="#3b8fc4" stroke="#1d5f8a" stroke-width="0.6"/>
 <path d="M18.5,608 L24.3,613.8 M24.3,608 L18.5,613.8" stroke="#111" stroke-width="1.9" fill="none"/>
 <path d="M8,635.5 C7.5,626.5 10,621.0 12.3,621.0 C14.8,621.0 14,626.5 15.5,629.0 C16.5,631.0 18,633.0 19,634.0" fill="none" stroke="#222" stroke-width="1.7"/>
 <path d="M23.5,620.0 L22,634.5" stroke="#222" stroke-width="1.6"/>
 <circle cx="14.8" cy="628.2" r="2.1" fill="#3b8fc4" stroke="#1d5f8a" stroke-width="0.6"/>
 <path d="M18.8,631.0 L21.6,635.0 M24.3,631.0 L20,637.8" stroke="#111" stroke-width="1.7" fill="none"/>
 <path d="M8,658.5 C7.5,649.5 10,644.0 12.3,644.0 C14.8,644.0 14,649.5 15.5,652.0 C16.5,654.0 18,656.0 19,657.0" fill="none" stroke="#222" stroke-width="1.7"/>
 <path d="M23.5,643.0 L22,657.5" stroke="#222" stroke-width="1.6"/>
 <circle cx="14.8" cy="651.2" r="2.1" fill="#3b8fc4" stroke="#1d5f8a" stroke-width="0.6"/>
 <path d="M18.5,654.5 H24.3 L18.5,660.0 H24.5" stroke="#111" stroke-width="1.7" fill="none"/>
</svg>

<div class="a" style="left:33px;top:673px;width:13px;height:13px;background:#fff;border:1px solid #c8c8c8"></div>
<div class="t" style="left:49px;top:674px;color:#8a8a8a">相切驱动</div>
<div class="btn" style="left:34px;top:692px;width:102px;height:21px">重设此控标</div>
<div class="btn" style="left:35px;top:723px;width:102px;height:21px">重设所有控标</div>
<div class="btn" style="left:35px;top:752px;width:102px;height:21px;background:#cccccc;border-color:#bcbcbc;color:#8c8c8c">弛张样条曲线</div>

<!-- panel notch -->
<div class="a" style="left:237px;top:561px;width:9px;height:38px;background:#f7f7f7;border:1px solid #8f8f8f;border-left:none"></div>
<div class="a" style="left:238px;top:577px;width:6px;height:6px;border-radius:50%;background:#ddd;border:1px solid #999"></div>


<!-- heads-up view toolbar -->
<svg class="a" style="left:880px;top:118px" width="250" height="30" viewBox="880 118 250 30">
 <defs>
  <linearGradient id="lens" x1="0" y1="0" x2="1" y2="1"><stop offset="0" stop-color="#f4f4f4"/><stop offset="1" stop-color="#c4ccd2"/></linearGradient>
  <linearGradient id="tube" x1="0" y1="0" x2="0" y2="1"><stop offset="0" stop-color="#ffffff"/><stop offset="0.5" stop-color="#d8d8d8"/><stop offset="1" stop-color="#9a9a9a"/></linearGradient>
  <linearGradient id="cube" x1="0" y1="0" x2="1" y2="1"><stop offset="0" stop-color="#a8d4f0"/><stop offset="1" stop-color="#3d8cc4"/></linearGradient>
 </defs>
 <!-- zoom to fit -->
 <path d="M896.5,134.7 L889.3,141" stroke="#3f6f8f" stroke-width="3.6" stroke-linecap="round"/>
 <path d="M896.5,134.7 L889.3,141" stroke="#7cc0e6" stroke-width="2" stroke-linecap="round"/>
 <circle cx="899.9" cy="130.2" r="5.6" fill="url(#lens)" stroke="#6a6a6a" stroke-width="1.2"/>
 <path d="M899.9,126.4 L898.6,128 H901.2Z M899.9,134 L898.6,132.4 H901.2Z M896.1,130.2 L897.7,128.9 V131.5Z M903.7,130.2 L902.1,128.9 V131.5Z" fill="#333"/>
 <!-- zoom area -->
 <path d="M919.1,124.5 H932.1 V136.4" fill="none" stroke="#444" stroke-width="1.1" stroke-dasharray="2.2,1.6"/>
 <path d="M918.5,136.5 L914,141" stroke="#3f6f8f" stroke-width="3.6" stroke-linecap="round"/>
 <path d="M918.5,136.5 L914,141" stroke="#7cc0e6" stroke-width="2" stroke-linecap="round"/>
 <circle cx="923.1" cy="131.3" r="6.2" fill="url(#lens)" stroke="#7a7a7a" stroke-width="1.1"/>
 <!-- previous view -->
 <g transform="rotate(-37 949 131.5)">
  <path d="M939.5,127.5 L951,128 L953,129 H959 V134 H953 L951,135 L939.5,135.5 Z" fill="url(#tube)" stroke="#666" stroke-width="0.9"/>
  <ellipse cx="939.5" cy="131.5" rx="1.8" ry="4" fill="#cfcfcf" stroke="#666" stroke-width="0.9"/>
 </g>
 <path d="M949,137 H957.6" stroke="#2f7fb5" stroke-width="2.4"/><path d="M948,137 L952,133.8 V140.2Z" fill="#2f7fb5"/>
 <!-- section view -->
 <path d="M972,130.5 C972,129 979,129 979,130.5 V141.5 C977,140.5 974,140.5 972,141.5 Z" fill="#e4e4e4" stroke="#555" stroke-width="0.8"/>
 <path d="M966.5,129 V139 C967.5,140.5 970,141.2 972,141.5 V130.5 Z" fill="#3a8cc4" stroke="#2a4a5e" stroke-width="0.9"/>
 <path d="M979,130.5 V141.5 C981,141.2 983.5,140.5 984.5,139 V129 Z" fill="#3a8cc4" stroke="#2a4a5e" stroke-width="0.9"/>
 <path d="M967.5,134 L970.5,131.5 M967.5,137.5 L971,134.5 M968,140.5 L971,138 M980,134.5 L983.5,131.5 M980,138 L983.5,135 M980.5,141 L983.5,138.5" stroke="#bfe2f7" stroke-width="0.8"/>
 <path d="M966.5,129 C966.5,125.5 984.5,125.5 984.5,129 L979,130.5 C979,129 972,129 972,130.5 Z" fill="#d2d2d2" stroke="#444" stroke-width="0.9"/>
 <!-- dynamic annotation -->
 <g transform="rotate(-37 999 131.5)">
  <path d="M989.5,127.5 L1001,128 L1003,129 H1009 V134 H1003 L1001,135 L989.5,135.5 Z" fill="url(#tube)" stroke="#666" stroke-width="0.9"/>
  <ellipse cx="989.5" cy="131.5" rx="1.8" ry="4" fill="#cfcfcf" stroke="#666" stroke-width="0.9"/>
 </g>
 <path d="M1001.5,123.2 L993,129.2 L996.8,129.2 L991.8,133.8 L1001.2,128 L997.6,128 L1002.3,123.2Z" fill="#f4a21c" stroke="#c4561a" stroke-width="0.7"/>
 <text x="1001" y="141.5" font-family="Liberation Serif" font-size="10.5" font-weight="bold" fill="#3a8cc4">A</text>
 <!-- view orientation -->
 <path d="M1018,128 L1022,124 H1036 V137 L1032,141 H1018Z" fill="url(#cube)" stroke="#333" stroke-width="1"/>
 <path d="M1032,128 L1036,124 V137 L1032,141Z" fill="#fff" stroke="#333" stroke-width="1"/>
 <path d="M1018,128 H1032 V141" fill="none" stroke="#333" stroke-width="1"/>
 <path d="M1023,126.5 H1027M1033.5,131 V135" stroke="#444" stroke-width="0.8"/>
 <path d="M1043.5,131.5H1048.5L1046,134Z" fill="#888"/>
 <!-- display style -->
 <path d="M1059,127 L1064,123.5 L1076.5,125 V139 L1071,142 L1059,140Z" fill="url(#cube)" stroke="#444" stroke-width="1"/>
 <path d="M1065,127.5 L1076.5,125 V139 L1071,142 L1065,141Z" fill="#f8f8f8" stroke="#444" stroke-width="1"/>
 <path d="M1059,127 L1065,127.5 V141" fill="none" stroke="#444" stroke-width="1"/>
 <path d="M1083.5,131.5H1088.5L1086,134Z" fill="#888"/>
 <!-- hide/show -->
 <path d="M1098,132C1102,126 1112,126 1116,132C1112,138 1102,138 1098,132Z" fill="#e4e4e4" stroke="#777" stroke-width="1"/>
 <circle cx="1107" cy="132" r="4" fill="#555"/>
 <path d="M1107,125V140" stroke="#333" stroke-width="1"/>
 <path d="M1123,131.5H1128L1125.5,134Z" fill="#888"/>
</svg>

<!-- watermark -->
<div class="a" style="left:996px;top:767px;width:129px;height:39px;background:rgba(245,250,255,0.75)"></div>
<svg class="a" style="left:996px;top:766px" width="132" height="42" viewBox="996 766 132 42">
 <path d="M1028.5,801.1 L1029.6,800.8 L1030.7,800.5 L1031.8,800.1 L1032.8,799.8 L1033.9,799.4 L1034.9,799.0 L1035.9,798.5 L1036.9,798.1 L1037.9,797.6 L1038.8,797.1 L1039.8,796.6 L1040.7,796.0 L1041.5,795.5 L1042.3,794.9 L1043.1,794.3 L1043.9,793.7 L1044.6,793.1 L1045.3,792.5 L1046.0,791.9 L1046.6,791.2 L1047.1,790.6 L1047.7,789.9 L1048.2,789.3 L1048.6,788.6" fill="none" stroke="#8cc0ea" stroke-width="1.6" stroke-linecap="round"/>
 <path d="M1000.7,786.8 L1001.3,785.5 L1002.2,784.3 L1003.1,783.1 L1004.2,781.9 L1005.5,780.8 L1006.9,779.7 L1008.3,778.6 L1009.9,777.6 L1011.6,776.7 L1013.4,775.8 L1015.3,775.0 L1017.2,774.2 L1019.1,773.6 L1021.1,773.0 L1023.1,772.5 L1025.2,772.2 L1027.2,771.9 L1029.2,771.7 L1031.2,771.6 L1033.2,771.6 L1035.1,771.7 L1036.9,771.9 L1038.7,772.2 L1040.4,772.6" fill="none" stroke="#e86a5a" stroke-width="1.2" stroke-linecap="round"/>
 <path d="M1000.7,786.8 L1000.1,788.0 L999.8,789.2 L999.6,790.4 L999.5,791.6 L999.7,792.8 L999.9,793.9 L1000.4,795.0 L1001.0,796.0 L1001.8,797.0 L1002.7,797.9 L1003.7,798.7 L1004.9,799.5 L1006.2,800.2 L1007.7,800.8 L1009.2,801.3 L1010.8,801.7 L1012.6,802.0 L1014.4,802.2 L1016.3,802.4 L1018.2,802.4 L1020.2,802.3 L1022.2,802.2 L1024.3,801.9 L1026.3,801.6" fill="none" stroke="#5b86cf" stroke-width="3.8" stroke-linecap="round"/>
 <path d="M1042.7,773.4 L1043.7,773.8 L1044.6,774.2 L1045.4,774.7 L1046.2,775.2 L1046.9,775.8 L1047.6,776.3 L1048.2,776.9 L1048.7,777.6 L1049.1,778.2 L1049.5,778.9 L1049.9,779.6 L1050.1,780.3 L1050.3,781.1 L1050.4,781.9 L1050.5,782.6 L1050.4,783.4 L1050.3,784.2 L1050.2,785.0 L1049.9,785.8 L1049.6,786.7 L1049.2,787.5 L1048.8,788.3 L1048.3,789.1 L1047.7,789.9" fill="none" stroke="#f0a850" stroke-width="3.6" stroke-linecap="round"/>
 <circle cx="1018.5" cy="773.5" r="2.2" fill="#6a90d2"/>
 <text x="1007.5" y="798" font-family="Liberation Serif" font-style="italic" font-size="22" fill="#5a80c8" textLength="14" lengthAdjust="spacingAndGlyphs">X</text>
 <text x="1025" y="797.5" font-family="Liberation Serif" font-style="italic" font-size="22" fill="#ec8a5c" textLength="14" lengthAdjust="spacingAndGlyphs">S</text>
 <text x="1053.5" y="791" font-family="Liberation Sans" font-weight="bold" font-size="22" fill="#6e7da0" textLength="68.5" lengthAdjust="spacingAndGlyphs">资料网</text>
 <text x="1052.5" y="801.5" font-family="Liberation Mono" font-weight="bold" font-size="8.5" fill="#7885a5" textLength="69.5" lengthAdjust="spacingAndGlyphs">ZL.XS1616.COM</text>
</svg>

<!-- red annotation arrow (on top) -->
<svg class="a" style="left:400px;top:100px" width="32" height="112" viewBox="400 100 32 112">
 <path d="M424.9,102 L430,119.7 L425.9,118.5 L403.2,209.4 L417.7,117.3 L414,116.4 Z" fill="#fa3434"/>
</svg>

</body></html>
